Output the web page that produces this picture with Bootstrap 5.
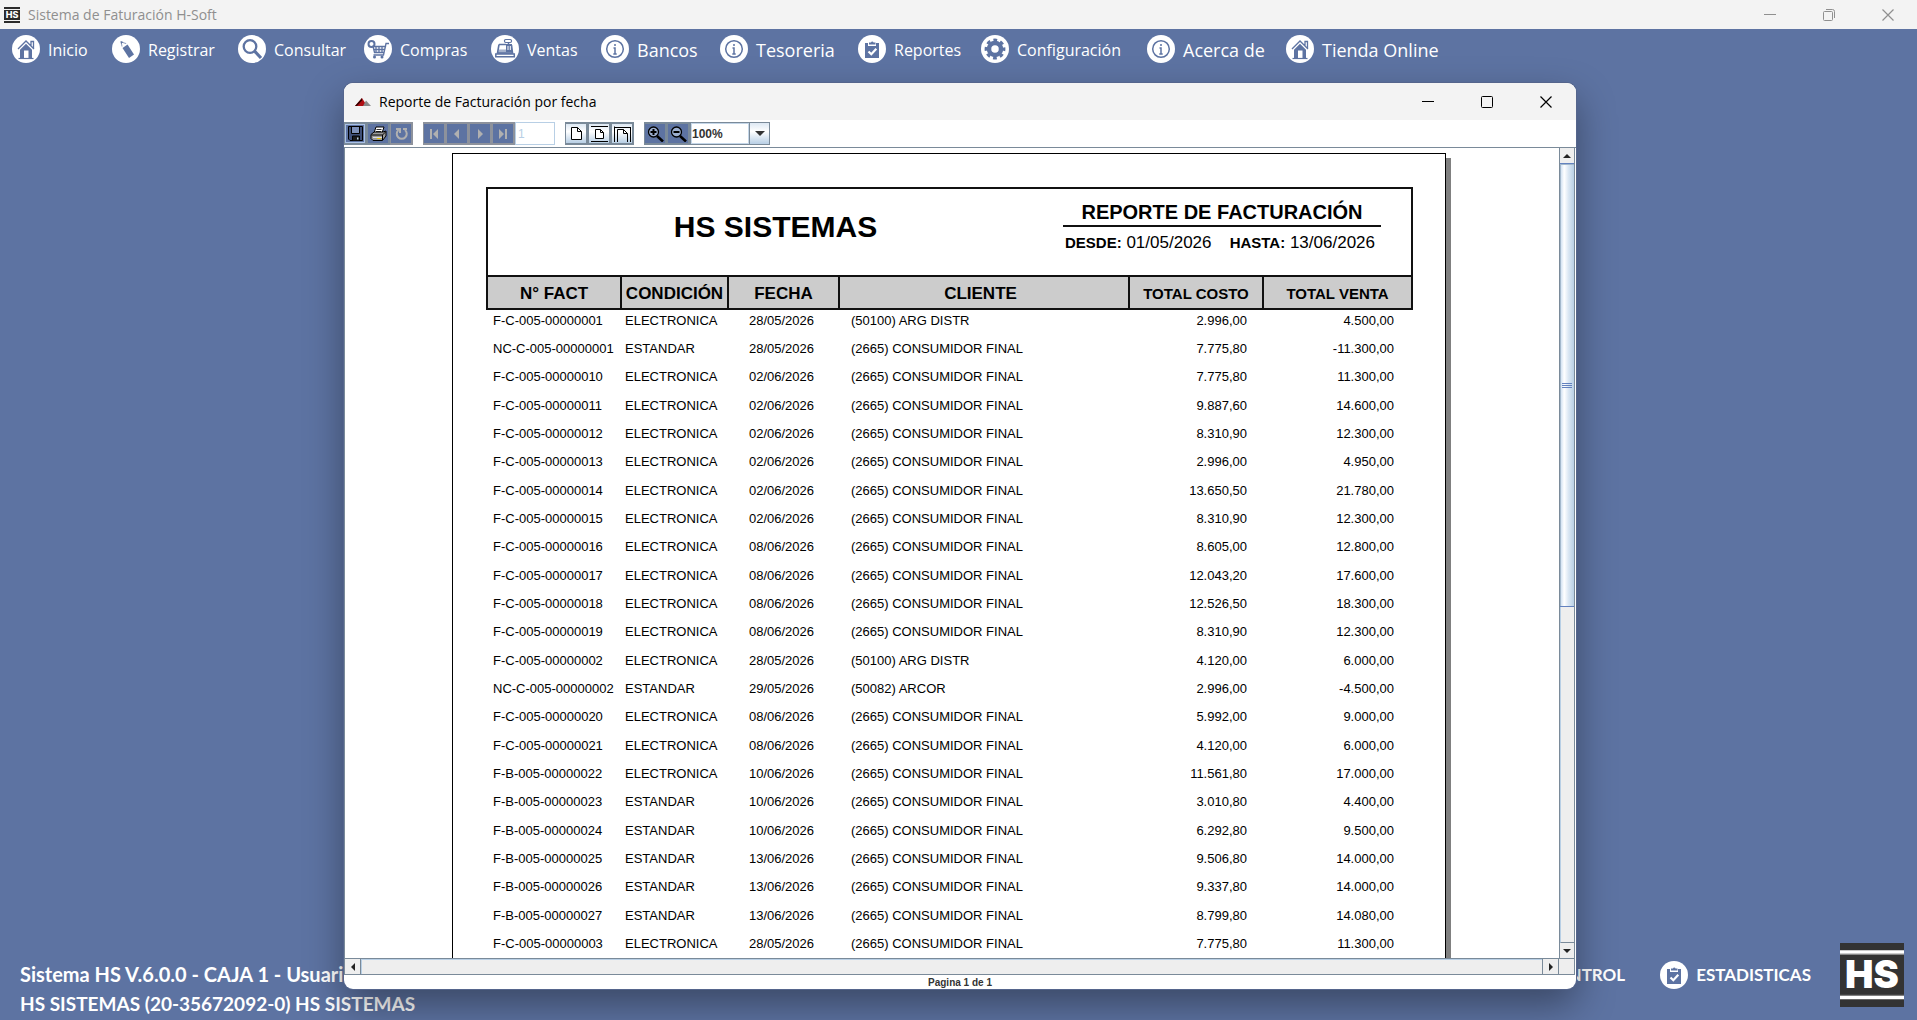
<!DOCTYPE html>
<html lang="es">
<head>
<meta charset="utf-8">
<meta name="viewport" content="width=device-width, initial-scale=1">
<title>Sistema de Faturación H-Soft</title>
<link href="https://cdn.jsdelivr.net/npm/bootstrap@5.3.0/dist/css/bootstrap.min.css" rel="stylesheet">
<style>
:root { --blue: #5d73a2; --steel: #7a8a99; --ice: #b8cfe5; }
body { font-family: "Open Sans", "Noto Sans", sans-serif; background: var(--blue); overflow: hidden; }
button { padding: 0; border: 0; background: none; color: inherit; display: flex; align-items: center; justify-content: center; flex: none; }
svg { display: block; flex: none; }
.app-title { height: 29px; background: #f3f3f3; color: #8f8f8f; font-size: 14px; line-height: 29px; padding-left: 4px; }
.win-btn { width: 59px; height: 26px; }
.menu-bar { display: grid; grid-template-columns: 100px 126px 126px 127px 110px 119px 138px 123px 166px 139px auto; padding: 6px 12px; }
.menu-bar a, .foot-link { color: #fff; text-decoration: none; font-size: 16px; line-height: 30px; height: 28px; white-space: nowrap; display: flex; align-items: center; gap: 8px; }
.menu-bar a.big { font-size: 18px; line-height: 32px; }
.menu-bar a > span { padding-top: 1px; }
.foot { font-family: Lato, sans-serif; font-weight: 700; color: #fff; padding: 0 13px 0 20px; }
.foot-info { font-size: 19px; line-height: 30px; white-space: nowrap; padding-bottom: 1px; }
.foot-info div:first-child { font-size: 20px; }
.foot-links { padding-bottom: 31px; gap: 35px; margin-right: 29px; }
.foot-link { font-size: 17px; line-height: 28px; }
.foot-link.wide { width: 202px; justify-content: space-between; }
.foot-logo { margin-bottom: 13px; }
.report-win { position: absolute; left: 344px; right: 341px; top: 83px; bottom: 31px; background: #fff; border-radius: 9px; overflow: hidden; z-index: 5; }
.win-shadow { position: absolute; left: 344px; right: 341px; top: 83px; bottom: 31px; border-radius: 9px; box-shadow: 0 0 0 1px #55658c, 0 16px 38px rgba(0,0,0,.38); z-index: 4; }
.win-title { height: 37px; flex: none; background: #f3f3f3; color: #000; font-size: 14px; padding: 0 1px 0 11px; }
.tool-bar { height: 27px; padding-top: 2px; gap: 10px; }
.tool { width: 23px; height: 23px; background: var(--blue); border: 2px solid #8d929c; border-left-width: 1px; color: #b0b0b0; }
.tool.on { border-color: var(--steel); color: #000; }
.tool.focus { box-shadow: inset 0 0 0 1px #a9c1e6; }
.tool.light { background: linear-gradient(#dde8f3, #fff 40%, #b8cfe5); border-color: var(--steel); color: #000; }
.page-no { width: 40px; height: 23px; border: 1px solid var(--ice); color: var(--ice); font: 12px "Liberation Sans", sans-serif; padding: 0 2px; background: #fff; }
.zoom-sel { width: 80px; height: 23px; border: 1px solid var(--steel); background: linear-gradient(#dde8f3, #fff 40%, #b8cfe5); }
.zoom-sel select { width: 59px; height: 21px; border: 0; border-right: 1px solid var(--steel); background: #fff; appearance: none; font: bold 12px "Liberation Sans", sans-serif; color: #333; padding: 0 1px; box-shadow: inset 0 0 0 1px #c4d6e8; }
.view { min-height: 0; border-top: 1px solid var(--steel); border-left: 1px solid var(--steel); }
.sheet-area { overflow: hidden; min-width: 0; padding: 5px 6px 0 0; }
.sheet { width: 994px; height: 1286px; margin: 0 auto; background: #fff; border: 1px solid #000; box-shadow: 5px 5px 0 #808080; padding: 33px 32px 0 33px; font-family: "Liberation Sans", Arial, sans-serif; color: #000; }
.rep-head { height: 88px; border: 2px solid #111; border-bottom: 0; }
.rep-head h1 { font-size: 30px; line-height: 36px; font-weight: 700; padding-top: 20px; margin: 0; }
.rep-info { width: 318px; margin-right: 30px; padding-top: 11px; }
.rep-info h2 { font-size: 20px; line-height: 25px; font-weight: 700; border-bottom: 2px solid #111; margin: 0 0 4px; height: 27px; }
.rep-dates { font-size: 17px; line-height: 24px; padding: 0 6px 0 2px; }
.rep-dates b { font-size: 15px; }
.rep-table { width: 100%; table-layout: fixed; border-collapse: separate; border-spacing: 0; font-size: 13px; line-height: 20px; }
.rep-table th { height: 35px; border: 2px solid #111; border-right: 0; background: #ccc; font-size: 17px; text-align: center; padding: 2px 0 0; line-height: 20px; white-space: nowrap; }
.rep-table th:last-child { border-right: 2px solid #111; }
.rep-table th:nth-child(4) { padding-right: 7px; }
.rep-table th.money { font-size: 15px; }
.rep-table td { height: 28px; padding: 1px 0 0 5px; vertical-align: top; white-space: nowrap; }
.rep-table tr:nth-child(3n) td { height: 29px; }
.rep-table td:nth-child(1) { padding-left: 7px; }
.rep-table td:nth-child(3) { padding-left: 0; padding-right: 2px; text-align: center; }
.rep-table td:nth-child(4) { padding-left: 13px; }
.rep-table td:nth-child(5) { text-align: right; padding-right: 15px; }
.rep-table td:nth-child(6) { text-align: right; padding-right: 19px; }
.v-bar { width: 16px; border-left: 1px solid var(--steel); border-right: 1px solid var(--steel); margin-right: 1px; background: #eee; flex: none; }
.v-bar button { width: 14px; height: 15px; }
.v-thumb { height: 444px; border: 1px solid #6382bf; border-width: 1px 0; background: linear-gradient(90deg, #c5d9ee, #fff 30%, #dbe7f3 60%, #b8cfe5); box-shadow: inset 1px 1px 0 #a3b8cc; }
.v-rest { border-bottom: 1px solid var(--steel); border-left: 1px solid var(--ice); }
.h-bar { height: 17px; border: 1px solid var(--steel); margin-right: 1px; background: #eee; flex: none; }
.h-bar button { width: 15px; height: 15px; }
.h-rest { border: 1px solid var(--steel); border-width: 0 1px; box-shadow: inset 1px 1px 0 var(--ice); }
.h-corner { width: 16px; border-left: 1px solid var(--steel); }
.page-state { height: 14px; padding-top: 2px; font: bold 10px/12px "Liberation Sans", sans-serif; color: #333; text-align: center; }
</style>
</head>
<body class="vh-100 d-flex flex-column">

<svg width="0" height="0" class="position-absolute" aria-hidden="true">
  <symbol id="i-home" viewBox="0 0 28 28"><circle cx="14" cy="14" r="14" fill="#fff"/><path d="m6 14 8-8 8 8M19 10.500V6.500h2.500v6.500" fill="none" stroke="#5d73a2" stroke-width="1.300"/><path d="M8 14.800 14 8.800l6 6V23h-3.500v-7.500h-4.500V23H8z" fill="#5d73a2"/><path d="M6.500 23.500h15" stroke="#5d73a2" stroke-width="1.200"/></symbol>
  <symbol id="i-pencil" viewBox="0 0 28 28"><circle cx="14" cy="14" r="14" fill="#fff"/><path d="m10.500 13 5-3.500 6.500 10-5 3.500z" fill="#5d73a2"/><path d="m10 11.500-.8-4.500 5 1.600" fill="none" stroke="#5d73a2" stroke-width=".7"/><path d="m8.500 6 2.800 1-2.300 2z" fill="#5d73a2"/></symbol>
  <symbol id="i-search" viewBox="0 0 28 28"><circle cx="14" cy="14" r="14" fill="#fff"/><circle cx="12" cy="11.500" r="6.300" fill="none" stroke="#5d73a2" stroke-width="2.300"/><path d="m16.500 16 6.500 7" stroke="#5d73a2" stroke-width="3.200"/></symbol>
  <symbol id="i-cart" viewBox="0 0 28 28"><circle cx="14" cy="14" r="14" fill="#fff"/><path d="M25 8.500h-3L19.500 20H9.500M9 11.500h12.500L20 17.500h-9.500zM9.500 14.500h11.500M12 11v6.500M15 11v6.500M18 11v6.500" fill="none" stroke="#5d73a2" stroke-width="1.300"/><circle cx="7.500" cy="9" r="3" fill="none" stroke="#5d73a2" stroke-width="2"/><circle cx="10.500" cy="22" r="1.500" fill="#5d73a2"/><circle cx="18" cy="22" r="1.500" fill="#5d73a2"/></symbol>
  <symbol id="i-till" viewBox="0 0 28 28"><circle cx="14" cy="14" r="14" fill="#fff"/><path d="M8 9.500h7M8 9.500 6.500 18h15L20.500 10" fill="none" stroke="#5d73a2" stroke-width="1.600"/><path d="M15 9h6v8h-6z" fill="#5d73a2"/><path d="M8 14.500h13l1.500 4.500h-17z" fill="#5d73a2" opacity=".55"/><path d="M17 11v4M19.300 11v4" stroke="#fff" stroke-width="1"/><path d="M4.800 19h18.500v2.800H4.800z" fill="#fff" stroke="#5d73a2" stroke-width="1.500"/><rect x="13.500" y="4.500" width="7" height="3" rx="1.200" fill="none" stroke="#5d73a2" stroke-width="1.200"/><path d="M17.500 7v3" stroke="#5d73a2" stroke-width="1.500"/></symbol>
  <symbol id="i-info" viewBox="0 0 28 28"><circle cx="14" cy="14" r="14" fill="#fff"/><circle cx="14" cy="14" r="8.300" fill="none" stroke="#5d73a2" stroke-width="1.500"/><path d="M14 9v2M12.500 13H14v6M12.300 19h3.400" fill="none" stroke="#5d73a2" stroke-width="1.500"/></symbol>
  <symbol id="i-clip" viewBox="0 0 28 28"><circle cx="14" cy="14" r="14" fill="#fff"/><path d="M7 8h3v3h8V8h3v15H7z" fill="#5d73a2"/><path d="M11 9.500V7.500h2a1.300 1.300 0 0 1 2.500 0h2v2z" fill="#5d73a2"/><path d="m10.500 16.500 2.800 2.700 5-5.400" fill="none" stroke="#fff" stroke-width="2.200"/></symbol>
  <symbol id="i-gear" viewBox="0 0 28 28"><circle cx="14" cy="14" r="14" fill="#fff"/><circle cx="14" cy="14" r="6" fill="none" stroke="#5d73a2" stroke-width="4.500"/><circle cx="14" cy="14" r="9" fill="none" stroke="#5d73a2" stroke-width="2.800" stroke-dasharray="3.800 3.269" stroke-dashoffset="1.900"/></symbol>
  <symbol id="i-min" viewBox="0 0 12 12"><path d="M0 5.500h12" stroke="currentColor"/></symbol>
  <symbol id="i-x" viewBox="0 0 12 12"><path d="m.5.500 11 11M11.500.500l-11 11" stroke="currentColor" stroke-width="1.200"/></symbol>
</svg>

<header class="app-title d-flex align-items-center">
  <svg width="16" height="16" viewBox="0 0 16 16"><path d="M0 0h16v2H0zM0 14h16v2H0zM0 3h16v10H0z" fill="#2b2b2b"/><text x="8" y="11" text-anchor="middle" font-family="Inter" font-weight="800" font-size="9" fill="#fff">HS</text></svg>
  <span class="ms-2">Sistema de Faturación H-Soft</span>
  <div class="ms-auto d-flex">
    <button class="win-btn" aria-label="Minimizar"><svg width="12" height="12"><use href="#i-min"/></svg></button>
    <button class="win-btn" aria-label="Restaurar"><svg width="12" height="12" fill="none" stroke="currentColor"><rect x=".5" y="2.500" width="9" height="9" rx="1"/><path d="M3 .5h6.500a2 2 0 0 1 2 2V9"/></svg></button>
    <button class="win-btn" aria-label="Cerrar"><svg width="12" height="12"><use href="#i-x"/></svg></button>
  </div>
</header>

<nav class="menu-bar">
  <a href="#"><svg width="28" height="28"><use href="#i-home"/></svg><span>Inicio</span></a>
  <a href="#"><svg width="28" height="28"><use href="#i-pencil"/></svg><span>Registrar</span></a>
  <a href="#"><svg width="28" height="28"><use href="#i-search"/></svg><span>Consultar</span></a>
  <a href="#"><svg width="28" height="28"><use href="#i-cart"/></svg><span>Compras</span></a>
  <a href="#"><svg width="28" height="28"><use href="#i-till"/></svg><span>Ventas</span></a>
  <a href="#" class="big"><svg width="28" height="28"><use href="#i-info"/></svg><span>Bancos</span></a>
  <a href="#" class="big"><svg width="28" height="28"><use href="#i-info"/></svg><span>Tesoreria</span></a>
  <a href="#"><svg width="28" height="28"><use href="#i-clip"/></svg><span>Reportes</span></a>
  <a href="#"><svg width="28" height="28"><use href="#i-gear"/></svg><span>Configuración</span></a>
  <a href="#" class="big"><svg width="28" height="28"><use href="#i-info"/></svg><span>Acerca de</span></a>
  <a href="#" class="big"><svg width="28" height="28"><use href="#i-home"/></svg><span>Tienda Online</span></a>
</nav>

<footer class="foot mt-auto d-flex align-items-end">
  <div class="foot-info">
    <div>Sistema HS V.6.0.0 - CAJA 1 - Usuari</div>
    <div>HS SISTEMAS (20-35672092-0) HS SISTEMAS</div>
  </div>
  <div class="foot-links ms-auto d-flex align-items-center">
    <a href="#" class="foot-link wide"><svg width="28" height="28"><use href="#i-clip"/></svg>CONTROL</a>
    <a href="#" class="foot-link"><svg width="28" height="28"><use href="#i-clip"/></svg>ESTADISTICAS</a>
  </div>
  <svg width="64" height="64" class="foot-logo" viewBox="0 0 64 64"><rect width="64" height="64" fill="#333"/><path d="M0 9h64M0 54.500h64" stroke="#fff" stroke-width="3.500"/><path d="M0 11.500h64M0 52.300h64" stroke="#888" stroke-width="1"/><text x="32" y="45" text-anchor="middle" font-family="Inter" font-weight="900" font-size="38" fill="#fff">HS</text></svg>
</footer>

<div class="win-shadow"></div>
<section class="report-win d-flex flex-column" aria-label="Reporte de Facturación por fecha">
  <header class="win-title d-flex align-items-center">
    <svg width="16" height="10" class="me-2" viewBox="0 0 16 10"><path d="M7 1 0 9h12z" fill="#b00e14"/><path d="M7 1 0 9h2l5-5.500z" fill="#300"/><path d="m11 3.500-3 5.500h8z" fill="#888"/></svg>
    <span>Reporte de Facturación por fecha</span>
    <div class="ms-auto d-flex">
      <button class="win-btn" aria-label="Minimizar"><svg width="12" height="12"><use href="#i-min"/></svg></button>
      <button class="win-btn" aria-label="Maximizar"><svg width="12" height="12" fill="none" stroke="currentColor"><rect x=".5" y=".5" width="11" height="11" rx="1"/></svg></button>
      <button class="win-btn" aria-label="Cerrar"><svg width="12" height="12"><use href="#i-x"/></svg></button>
    </div>
  </header>

  <div class="tool-bar d-flex flex-shrink-0">
    <div class="d-flex">
      <button class="tool on focus" aria-label="Guardar"><svg width="15" height="15"><path d="M.5.500h14v14H2l-1.500-1.500z" fill="#3f5078" stroke="#000"/><path d="M3.500 1v6.500h8V1" fill="#7d90b8" stroke="#000"/><path d="M4.500 14.500V10h7v4.500" fill="#1a1a1a" stroke="#000"/><path d="M9 11.500h1.500v2H9z" fill="#b8cfe5"/></svg></button>
      <button class="tool on" aria-label="Imprimir"><svg width="17" height="16"><path d="M6 1h8l-2 6H4z" fill="#fff" stroke="#000"/><path d="M6.500 3.500h5M6 5.500h5" stroke="#333"/><path d="M1 8.500 4 6h9l3-1v5l-3.500 4.500H3l-2-2z" fill="#999" stroke="#000"/><path d="M1.500 9h11l3-3M12.500 9v5" fill="none" stroke="#000"/><path d="M3 11.500h9" stroke="#ddd"/><path d="M7 12.500h4" stroke="#e8c200"/></svg></button>
      <button class="tool" aria-label="Recargar" disabled><svg width="13" height="13" fill="none" stroke="currentColor" stroke-width="2"><path d="M3.500 3a5 5 0 1 0 6.500 0M1 2h4v4M8 2h4"/></svg></button>
    </div>
    <div class="d-flex">
      <button class="tool" aria-label="Primera" disabled><svg width="10" height="10" fill="currentColor"><path d="M1 0h2v10H1zM9 0v10L4 5z"/></svg></button>
      <button class="tool" aria-label="Anterior" disabled><svg width="10" height="10" fill="currentColor"><path d="M7 0v10L2 5z"/></svg></button>
      <button class="tool" aria-label="Siguiente" disabled><svg width="10" height="10" fill="currentColor"><path d="M3 0v10l5-5z"/></svg></button>
      <button class="tool" aria-label="Última" disabled><svg width="10" height="10" fill="currentColor"><path d="M7 0h2v10H7zM1 0v10l5-5z"/></svg></button>
      <input class="page-no" value="1" aria-label="Página" disabled>
    </div>
    <div class="d-flex">
      <button class="tool light" aria-label="Tamaño real"><svg width="13" height="15" fill="#fff" stroke="#000"><path d="M1.500 1.500h6l4 4v8h-10z"/><path d="M7.500 1.500v4h4" fill="none"/></svg></button>
      <button class="tool light" aria-label="Ajustar página"><svg width="17" height="16" fill="#fff" stroke="#000"><path d="M4.500 3.500h5l3 3v6h-8z"/><path d="M9.500 3.500v3h3M0 .5h17M0 15.500h17" fill="none"/></svg></button>
      <button class="tool light" aria-label="Ajustar ancho"><svg width="17" height="16" fill="none" stroke="#000"><path d="M.5 16V.500M16.500 16V1M3.500 16V3.500h6l4 4V16M9.500 3.500v4h4M0 1.500h17"/></svg></button>
    </div>
    <div class="d-flex">
      <button class="tool on" aria-label="Acercar"><svg width="17" height="16" fill="none" stroke="#000"><circle cx="6.500" cy="6" r="5" fill="#9db0d0" stroke-width="1.300"/><path d="M6.500 3v6M3.500 6h6" stroke-width="2"/><path d="m10 10 6 5.500" stroke-width="2.600"/></svg></button>
      <button class="tool on" aria-label="Alejar"><svg width="17" height="16" fill="none" stroke="#000"><circle cx="6.500" cy="6" r="5" fill="#9db0d0" stroke-width="1.300"/><path d="M3.500 6h6" stroke-width="2"/><path d="m10 10 6 5.500" stroke-width="2.600"/></svg></button>
      <div class="zoom-sel d-flex align-items-center">
        <select aria-label="Zoom"><option>100%</option></select>
        <svg width="10" height="5" class="mx-auto"><path d="M0 0h10L5 5z" fill="#333"/></svg>
      </div>
    </div>
  </div>

  <div class="view d-flex flex-fill">
    <div class="sheet-area flex-fill">
      <div class="sheet">
        <div class="rep-head d-flex">
          <h1 class="flex-fill text-center">HS SISTEMAS</h1>
          <div class="rep-info">
            <h2 class="text-center">REPORTE DE FACTURACIÓN</h2>
            <div class="rep-dates d-flex justify-content-between align-items-baseline">
              <span><b>DESDE:</b> 01/05/2026</span>
              <span><b>HASTA:</b> 13/06/2026</span>
            </div>
          </div>
        </div>
        <table class="rep-table">
          <colgroup><col style="width:134px"><col style="width:107px"><col style="width:111px"><col style="width:290px"><col style="width:134px"><col></colgroup>
          <thead><tr><th scope="col">N° FACT</th><th scope="col">CONDICIÓN</th><th scope="col">FECHA</th><th scope="col">CLIENTE</th><th scope="col" class="money">TOTAL COSTO</th><th scope="col" class="money">TOTAL VENTA</th></tr></thead>
          <tbody>
            <tr><td>F-C-005-00000001</td><td>ELECTRONICA</td><td>28/05/2026</td><td>(50100) ARG DISTR</td><td>2.996,00</td><td>4.500,00</td></tr>
            <tr><td>NC-C-005-00000001</td><td>ESTANDAR</td><td>28/05/2026</td><td>(2665) CONSUMIDOR FINAL</td><td>7.775,80</td><td>-11.300,00</td></tr>
            <tr><td>F-C-005-00000010</td><td>ELECTRONICA</td><td>02/06/2026</td><td>(2665) CONSUMIDOR FINAL</td><td>7.775,80</td><td>11.300,00</td></tr>
            <tr><td>F-C-005-00000011</td><td>ELECTRONICA</td><td>02/06/2026</td><td>(2665) CONSUMIDOR FINAL</td><td>9.887,60</td><td>14.600,00</td></tr>
            <tr><td>F-C-005-00000012</td><td>ELECTRONICA</td><td>02/06/2026</td><td>(2665) CONSUMIDOR FINAL</td><td>8.310,90</td><td>12.300,00</td></tr>
            <tr><td>F-C-005-00000013</td><td>ELECTRONICA</td><td>02/06/2026</td><td>(2665) CONSUMIDOR FINAL</td><td>2.996,00</td><td>4.950,00</td></tr>
            <tr><td>F-C-005-00000014</td><td>ELECTRONICA</td><td>02/06/2026</td><td>(2665) CONSUMIDOR FINAL</td><td>13.650,50</td><td>21.780,00</td></tr>
            <tr><td>F-C-005-00000015</td><td>ELECTRONICA</td><td>02/06/2026</td><td>(2665) CONSUMIDOR FINAL</td><td>8.310,90</td><td>12.300,00</td></tr>
            <tr><td>F-C-005-00000016</td><td>ELECTRONICA</td><td>08/06/2026</td><td>(2665) CONSUMIDOR FINAL</td><td>8.605,00</td><td>12.800,00</td></tr>
            <tr><td>F-C-005-00000017</td><td>ELECTRONICA</td><td>08/06/2026</td><td>(2665) CONSUMIDOR FINAL</td><td>12.043,20</td><td>17.600,00</td></tr>
            <tr><td>F-C-005-00000018</td><td>ELECTRONICA</td><td>08/06/2026</td><td>(2665) CONSUMIDOR FINAL</td><td>12.526,50</td><td>18.300,00</td></tr>
            <tr><td>F-C-005-00000019</td><td>ELECTRONICA</td><td>08/06/2026</td><td>(2665) CONSUMIDOR FINAL</td><td>8.310,90</td><td>12.300,00</td></tr>
            <tr><td>F-C-005-00000002</td><td>ELECTRONICA</td><td>28/05/2026</td><td>(50100) ARG DISTR</td><td>4.120,00</td><td>6.000,00</td></tr>
            <tr><td>NC-C-005-00000002</td><td>ESTANDAR</td><td>29/05/2026</td><td>(50082) ARCOR</td><td>2.996,00</td><td>-4.500,00</td></tr>
            <tr><td>F-C-005-00000020</td><td>ELECTRONICA</td><td>08/06/2026</td><td>(2665) CONSUMIDOR FINAL</td><td>5.992,00</td><td>9.000,00</td></tr>
            <tr><td>F-C-005-00000021</td><td>ELECTRONICA</td><td>08/06/2026</td><td>(2665) CONSUMIDOR FINAL</td><td>4.120,00</td><td>6.000,00</td></tr>
            <tr><td>F-B-005-00000022</td><td>ELECTRONICA</td><td>10/06/2026</td><td>(2665) CONSUMIDOR FINAL</td><td>11.561,80</td><td>17.000,00</td></tr>
            <tr><td>F-B-005-00000023</td><td>ESTANDAR</td><td>10/06/2026</td><td>(2665) CONSUMIDOR FINAL</td><td>3.010,80</td><td>4.400,00</td></tr>
            <tr><td>F-B-005-00000024</td><td>ESTANDAR</td><td>10/06/2026</td><td>(2665) CONSUMIDOR FINAL</td><td>6.292,80</td><td>9.500,00</td></tr>
            <tr><td>F-B-005-00000025</td><td>ESTANDAR</td><td>13/06/2026</td><td>(2665) CONSUMIDOR FINAL</td><td>9.506,80</td><td>14.000,00</td></tr>
            <tr><td>F-B-005-00000026</td><td>ESTANDAR</td><td>13/06/2026</td><td>(2665) CONSUMIDOR FINAL</td><td>9.337,80</td><td>14.000,00</td></tr>
            <tr><td>F-B-005-00000027</td><td>ESTANDAR</td><td>13/06/2026</td><td>(2665) CONSUMIDOR FINAL</td><td>8.799,80</td><td>14.080,00</td></tr>
            <tr><td>F-C-005-00000003</td><td>ELECTRONICA</td><td>28/05/2026</td><td>(2665) CONSUMIDOR FINAL</td><td>7.775,80</td><td>11.300,00</td></tr>
          </tbody>
        </table>
      </div>
    </div>
    <div class="v-bar d-flex flex-column">
      <button aria-label="Subir"><svg width="8" height="4"><path d="M4 0 8 4H0z" fill="#222"/></svg></button>
      <div class="v-thumb d-flex align-items-center justify-content-center flex-shrink-0"><svg width="10" height="5"><path d="M0 .5h10M0 2.500h10M0 4.500h10" stroke="#6382bf"/></svg></div>
      <div class="v-rest flex-fill"></div>
      <button aria-label="Bajar"><svg width="8" height="4"><path d="M0 0h8L4 4z" fill="#222"/></svg></button>
    </div>
  </div>
  <div class="h-bar d-flex">
    <button aria-label="Izquierda"><svg width="4" height="8"><path d="M4 0v8L0 4z" fill="#222"/></svg></button>
    <div class="h-rest flex-fill"></div>
    <button aria-label="Derecha"><svg width="4" height="8"><path d="M0 0v8l4-4z" fill="#222"/></svg></button>
    <div class="h-corner"></div>
  </div>
  <div class="page-state flex-shrink-0">Pagina 1 de 1</div>
</section>

<script src="https://cdn.jsdelivr.net/npm/bootstrap@5.3.0/dist/js/bootstrap.bundle.min.js"></script>
</body>
</html>
